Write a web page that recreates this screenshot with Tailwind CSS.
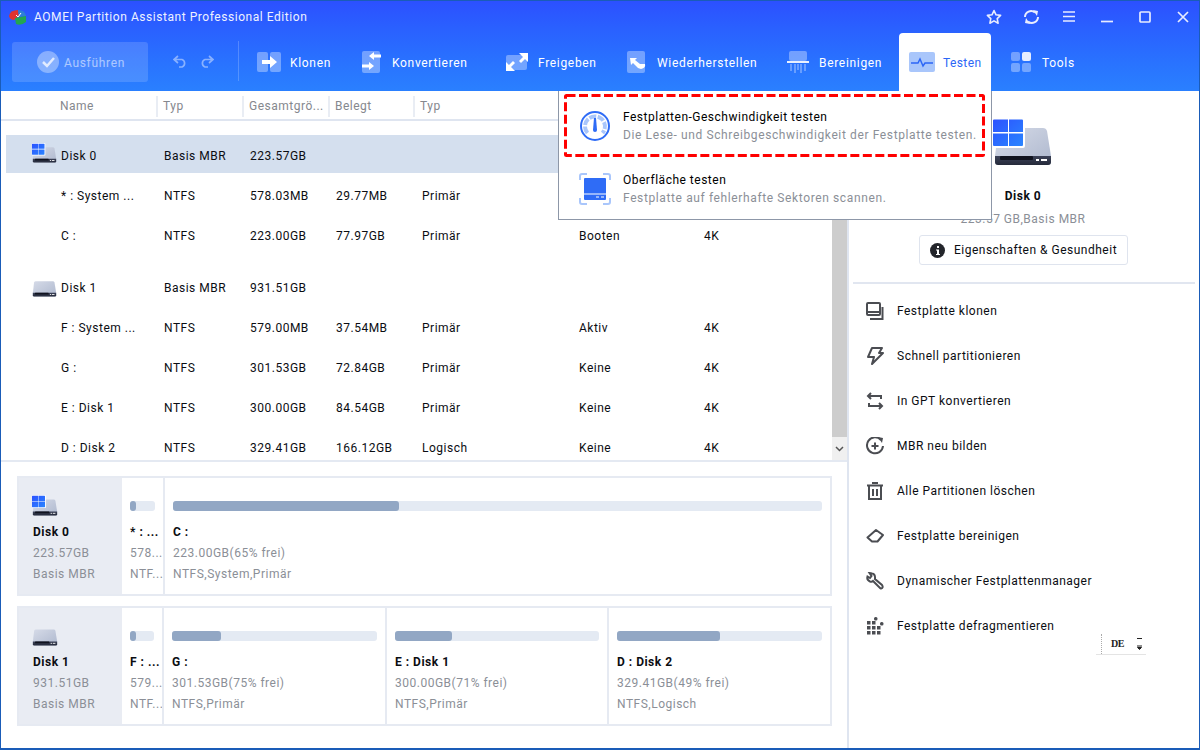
<!DOCTYPE html>
<html lang="en">
<head>
  <meta charset="UTF-8" />
  <title>AOMEI Partition Assistant</title>
  <script src="https://cdn.jsdelivr.net/npm/@tailwindcss/browser@4"></script>
</head>
<body class="w-[1200px] h-[750px] overflow-hidden bg-white [font-family:Roboto,sans-serif] text-[12px] tracking-[0.5px] text-[#0b0d12]">

<svg width="0" height="0" class="absolute">
  <defs>
    <linearGradient id="diskBody" x1="0" y1="0" x2="1" y2="1"><stop offset="0" stop-color="#d6dbe8"/><stop offset="1" stop-color="#aeb8ce"/></linearGradient>
    <linearGradient id="diskBase" x1="0" y1="0" x2="0" y2="1"><stop offset="0" stop-color="#3c4258"/><stop offset="1" stop-color="#252a3a"/></linearGradient>
    <linearGradient id="winBlue" x1="0" y1="0" x2="1" y2="1"><stop offset="0" stop-color="#2c52ff"/><stop offset="1" stop-color="#2a85ff"/></linearGradient>
    <symbol id="disk" viewBox="0 0 60 48">
      <path d="M9 10H50Q53 10 54 13L58 38V44Q58 47 55 47H5Q2 47 2 44V38L5 13Q6 10 9 10Z" fill="url(#diskBody)"/>
      <path d="M2 38H58V44Q58 47 55 47H5Q2 47 2 44Z" fill="url(#diskBase)"/>
      <rect x="7" y="38" width="33" height="4" rx="1" fill="#10131f"/>
      <rect x="43" y="41" width="3" height="2" fill="#fff"/><rect x="48" y="41" width="6" height="2" fill="#fff"/>
    </symbol>
    <symbol id="diskWin" viewBox="0 0 60 48">
      <use href="#disk"/>
      <rect x="0" y="0" width="32" height="30" rx="2" fill="#fff"/>
      <path d="M1 1.500h14v12.500H0V2.500q0-1 1-1ZM16 1.500h13q1 0 1 1V14H16ZM0 15.500h15V28H1q-1 0-1-1ZM16 15.500h14V27q0 1-1 1H16Z" fill="url(#winBlue)"/>
    </symbol>
  </defs>
</svg>

<div class="relative w-[1200px] h-[750px] flex flex-col border-x border-b-2 border-[#1a5cb8]">

  <!-- blue header -->
  <header class="h-[91px] shrink-0 bg-gradient-to-b from-[#2c50ff] to-[#2a80ff] border-t border-[#1a5cb8] text-white flex flex-col">
    <div class="h-[31px] flex items-center pl-[7px] shrink-0">
      <svg width="19" height="19" viewBox="0 0 19 19">
        <path d="M1 9Q2 3 10 3L11 9L6 13Q2 13 1 9Z" fill="#e0322f"/>
        <path d="M10 3Q17 3 18 9L11 10Z" fill="#2d7fd8"/>
        <path d="M7 11L18 9V15Q13 19 8 17Z" fill="#23a650"/>
        <path d="M8 8l2 2 3-4" stroke="#fff" stroke-width="1" fill="none"/>
      </svg>
      <span class="ml-[7px] text-[12px] tracking-[0.55px] text-[#eef1ff]">AOMEI Partition Assistant Professional Edition</span>
      <div class="ml-auto flex items-center">
        <svg class="mr-[21px]" width="16" height="16" viewBox="0 0 16 16"><path d="M8 1.500l2 4.300 4.600.6-3.400 3.200.9 4.600L8 11.900l-4.100 2.300.9-4.600L1.400 6.400 6 5.800Z" fill="none" stroke="#e8ecff" stroke-width="1.600" stroke-linejoin="round"/></svg>
        <svg class="mr-[23px]" width="17" height="16" viewBox="0 0 17 16"><path d="M2 8a6 6 0 0 1 10-4.400M15 8a6 6 0 0 1-10 4.400" fill="none" stroke="#e8ecff" stroke-width="2"/><path d="M10 1l5 1-1 5ZM7 15l-5-1 1-5Z" fill="#e8ecff"/></svg>
        <svg class="mr-[26px]" width="12" height="11" viewBox="0 0 12 11"><path d="M0 1h12M0 5.500h12M0 10h12" stroke="#e8ecff" stroke-width="1.700"/></svg>
        <svg class="mr-[26px] mt-[5px]" width="12" height="10" viewBox="0 0 12 10"><path d="M0 7.500h12" stroke="#e8ecff" stroke-width="1.700"/></svg>
        <svg class="mr-[26px]" width="12" height="12" viewBox="0 0 12 12"><rect x="1" y="1" width="10" height="10" rx="1" fill="none" stroke="#e8ecff" stroke-width="1.700"/></svg>
        <svg class="mr-[10px]" width="12" height="12" viewBox="0 0 12 12"><path d="M1 1l10 10M11 1L1 11" stroke="#e8ecff" stroke-width="1.700"/></svg>
      </div>
    </div>

    <div class="flex-1 flex items-stretch text-[12px] tracking-[0.68px]">
      <div class="ml-[11px] mt-[10px] mb-[9px] w-[136px] rounded-[3px] bg-white/15 flex items-center pl-[25px] gap-[5px] text-white/55">
        <svg width="22" height="22" viewBox="0 0 22 22"><circle cx="11" cy="11" r="11" fill="#fff" fill-opacity=".35"/><path d="M6 11l4 4 7-8" fill="none" stroke="#fff" stroke-opacity=".75" stroke-width="2.500"/></svg>
        <span class="mt-[2px]">Ausführen</span>
      </div>
      <div class="flex items-center gap-[11px] ml-[25px] w-[65px]">
        <svg width="15" height="13" viewBox="0 0 15 13"><path d="M5 1L1 4.500 5 8M1 4.500h8a4 4 0 0 1 0 7.500H6" fill="none" stroke="#fff" stroke-opacity=".45" stroke-width="1.700"/></svg>
        <svg width="15" height="13" viewBox="0 0 15 13"><path d="M10 1l4 3.500L10 8M14 4.500H6a4 4 0 0 0 0 7.500h3" fill="none" stroke="#fff" stroke-opacity=".45" stroke-width="1.700"/></svg>
      </div>
      <div class="w-px my-[9px] mb-[10px] bg-white/20"></div>

      <div class="ml-[8px] w-[104px] pl-[10px] flex items-center gap-[9px]">
        <svg width="24" height="20" viewBox="0 0 24 20"><rect width="11" height="20" rx="2" fill="#fff" fill-opacity=".35"/><rect x="13" width="11" height="20" rx="2" fill="#fff" fill-opacity=".35"/><path d="M5 8h8V4l7 6-7 6v-4H5Z" fill="#fff"/></svg>
        <span class="mt-[2px]">Klonen</span>
      </div>
      <div class="w-[145px] pl-[11px] flex items-center gap-[11px]">
        <svg width="19" height="22" viewBox="0 0 19 22"><rect x="0" y="0" width="18" height="22" rx="2" fill="#fff" fill-opacity=".35"/><path d="M19 3.500v3h-7v2.500L7 5l5-4v2.500ZM0 13.500h7V11l5 4-5 4v-2.500H0Z" fill="#fff"/></svg>
        <span class="mt-[2px]">Konvertieren</span>
      </div>
      <div class="w-[121px] pl-[10px] flex items-center gap-[10px]">
        <svg width="22" height="18" viewBox="0 0 22 18"><rect y="2" width="21" height="15" rx="2" fill="#fff" fill-opacity=".35"/><path d="M13 0h9v9l-3-3-4 4-2-2 4-4ZM9 18H0V9l3 3 4-4 2 2-4 4Z" fill="#fff"/></svg>
        <span class="mt-[2px]">Freigeben</span>
      </div>
      <div class="w-[160px] pl-[10px] flex items-center gap-[10px]">
        <svg width="20" height="22" viewBox="0 0 20 22"><rect width="18" height="22" rx="2" fill="#fff" fill-opacity=".35"/><path d="M3 7h7l-2 2 5 4h5q1 4-4 5-3 0-5-3l-3-3-2 2Z" fill="#fff"/></svg>
        <span class="mt-[2px]">Wiederherstellen</span>
      </div>
      <div class="w-[122px] pl-[10px] flex items-center gap-[10px]">
        <svg width="22" height="22" viewBox="0 0 22 22"><rect x="2" width="18" height="10" rx="2" fill="#fff" fill-opacity=".35"/><rect y="10" width="22" height="2" fill="#fff" fill-opacity=".9"/><path d="M4 13v7M8 13v9M11 13v6M14 13v9M18 13v7" stroke="#fff" stroke-opacity=".4" stroke-width="1.500"/></svg>
        <span class="mt-[2px]">Bereinigen</span>
      </div>
      <div class="w-[92px] mt-px pl-[10px] flex items-center gap-[8px] bg-white rounded-t-[4px] text-[#2c66f6] tracking-[0.4px]">
        <svg width="26" height="20" viewBox="0 0 26 20"><rect width="26" height="20" rx="2" fill="#a9c6fb"/><path d="M2 11h7l2-4 3 7 2-3h8" fill="none" stroke="#2c66f6" stroke-width="1.500"/></svg>
        <span class="mt-[2px]">Testen</span>
      </div>
      <div class="ml-[20px] flex items-center gap-[11px]">
        <svg width="20" height="20" viewBox="0 0 20 20"><rect width="9" height="9" rx="2" fill="#fff" fill-opacity=".35"/><rect x="11" width="9" height="9" rx="2" fill="#e6edff"/><rect y="11" width="9" height="9" rx="2" fill="#fff" fill-opacity=".35"/><rect x="11" y="11" width="9" height="9" rx="2" fill="#fff" fill-opacity=".35"/></svg>
        <span class="mt-[2px]">Tools</span>
      </div>
    </div>
  </header>

  <div class="flex-1 flex min-h-0">
    <!-- left side -->
    <main class="w-[846px] shrink-0 flex flex-col">
      <div class="h-[30px] shrink-0 border-b-2 border-[#dfe5f0] grid grid-cols-[157px_86px_86px_85px_1fr] items-center text-[#85888e] pt-[2px]">
        <div class="pl-[59px] border-r-2 border-[#e9edf4] h-[21px] leading-[21px]">Name</div>
        <div class="pl-[5px] border-r-2 border-[#e9edf4] h-[21px] leading-[21px]">Typ</div>
        <div class="pl-[5px] border-r-2 border-[#e9edf4] h-[21px] leading-[21px]">Gesamtgrö...</div>
        <div class="pl-[5px] border-r-2 border-[#e9edf4] h-[21px] leading-[21px]">Belegt</div>
        <div class="pl-[5px]">Typ</div>
      </div>

      <div class="h-[341px] shrink-0 flex border-b-2 border-[#e4e9f2]">
        <div class="flex-1 pt-[14px] pl-[5px] overflow-hidden">
          <div class="h-[38px] mb-[2px] pt-[4px] bg-[#d4dfee] grid grid-cols-[158px_86px_86px] items-center">
            <div class="flex items-center pl-[26px] gap-[4px]"><svg class="w-[25px] h-[20px] -mt-[6px]" viewBox="0 0 60 48"><use href="#diskWin"/></svg><span>Disk 0</span></div>
            <div>Basis MBR</div><div>223.57GB</div>
          </div>
          <div class="h-[40px] pt-[2px] grid grid-cols-[158px_86px_86px_86px_157px_125px_1fr] items-center"><div class="pl-[55px]">* : System ...</div><div>NTFS</div><div>578.03MB</div><div>29.77MB</div><div>Primär</div></div>
          <div class="h-[40px] pt-[2px] grid grid-cols-[158px_86px_86px_86px_157px_125px_1fr] items-center"><div class="pl-[55px]">C :</div><div>NTFS</div><div>223.00GB</div><div>77.97GB</div><div>Primär</div><div>Booten</div><div>4K</div></div>
          <div class="h-[40px] pt-[2px] mt-[12px] grid grid-cols-[158px_86px_86px] items-center">
            <div class="flex items-center pl-[26px] gap-[4px]"><svg class="w-[25px] h-[20px] -mt-[3px]" viewBox="0 0 60 48"><use href="#disk"/></svg><span>Disk 1</span></div>
            <div>Basis MBR</div><div>931.51GB</div>
          </div>
          <div class="h-[40px] pt-[2px] grid grid-cols-[158px_86px_86px_86px_157px_125px_1fr] items-center"><div class="pl-[55px]">F : System ...</div><div>NTFS</div><div>579.00MB</div><div>37.54MB</div><div>Primär</div><div>Aktiv</div><div>4K</div></div>
          <div class="h-[40px] pt-[2px] grid grid-cols-[158px_86px_86px_86px_157px_125px_1fr] items-center"><div class="pl-[55px]">G :</div><div>NTFS</div><div>301.53GB</div><div>72.84GB</div><div>Primär</div><div>Keine</div><div>4K</div></div>
          <div class="h-[40px] pt-[2px] grid grid-cols-[158px_86px_86px_86px_157px_125px_1fr] items-center"><div class="pl-[55px]">E : Disk 1</div><div>NTFS</div><div>300.00GB</div><div>84.54GB</div><div>Primär</div><div>Keine</div><div>4K</div></div>
          <div class="h-[40px] pt-[2px] grid grid-cols-[158px_86px_86px_86px_157px_125px_1fr] items-center"><div class="pl-[55px]">D : Disk 2</div><div>NTFS</div><div>329.41GB</div><div>166.12GB</div><div>Logisch</div><div>Keine</div><div>4K</div></div>
        </div>
        <div class="w-[15px] flex flex-col bg-[#f0f0f0]">
          <div class="flex-1 bg-[#cdcdcd]"></div>
          <div class="h-[23px] flex items-center justify-center">
            <svg width="9" height="6" viewBox="0 0 9 6"><path d="M1 1l3.500 3.500L8 1" fill="none" stroke="#555" stroke-width="1.500"/></svg>
          </div>
        </div>
      </div>

      <!-- disk map -->
      <div class="flex-1 pl-[16px] pt-[14px] flex flex-col gap-[10px]">
        <div class="w-[815px] h-[120px] border-2 border-[#e6eaf2] flex">
          <div class="w-[103px] shrink-0 bg-[#e9ecf3] pl-[14px] pt-[17px] leading-[21px]">
            <svg class="w-[26px] h-[21px] -ml-[1px] mb-[6px]" viewBox="0 0 60 48"><use href="#diskWin"/></svg>
            <div class="font-bold">Disk 0</div>
            <div class="text-[#8b8f97]">223.57GB</div>
            <div class="text-[#8b8f97]">Basis MBR</div>
          </div>
          <div class="w-[43px] shrink-0 pl-[8px] pt-[23px] overflow-hidden border-r-2 border-[#e6eaf2] leading-[21px]">
            <div class="w-[25px] h-[10px] rounded-[3px] bg-[#e4eaf3] mb-[11px]"><div class="w-[6px] h-full rounded-[3px] bg-[#92a7c4]"></div></div>
            <div class="font-bold whitespace-nowrap">* : ...</div>
            <div class="text-[#8b8f97] whitespace-nowrap">578...</div>
            <div class="text-[#8b8f97] whitespace-nowrap">NTF...</div>
          </div>
          <div class="flex-1 pl-[8px] pr-[8px] pt-[23px] leading-[21px]">
            <div class="h-[10px] rounded-[3px] bg-[#e4eaf3] mb-[11px]"><div class="w-[226px] h-full rounded-[3px] bg-[#92a7c4]"></div></div>
            <div class="font-bold">C :</div>
            <div class="text-[#8b8f97]">223.00GB(65% frei)</div>
            <div class="text-[#8b8f97]">NTFS,System,Primär</div>
          </div>
        </div>

        <div class="w-[815px] h-[120px] border-2 border-[#e6eaf2] flex">
          <div class="w-[103px] shrink-0 bg-[#e9ecf3] pl-[14px] pt-[17px] leading-[21px]">
            <svg class="w-[26px] h-[21px] -ml-[1px] mb-[6px]" viewBox="0 0 60 48"><use href="#disk"/></svg>
            <div class="font-bold">Disk 1</div>
            <div class="text-[#8b8f97]">931.51GB</div>
            <div class="text-[#8b8f97]">Basis MBR</div>
          </div>
          <div class="w-[42px] shrink-0 pl-[8px] pt-[23px] overflow-hidden border-r-2 border-[#e6eaf2] leading-[21px]">
            <div class="w-[24px] h-[10px] rounded-[3px] bg-[#e4eaf3] mb-[11px]"><div class="w-[6px] h-full rounded-[3px] bg-[#92a7c4]"></div></div>
            <div class="font-bold whitespace-nowrap">F : ...</div>
            <div class="text-[#8b8f97] whitespace-nowrap">579...</div>
            <div class="text-[#8b8f97] whitespace-nowrap">NTF...</div>
          </div>
          <div class="w-[223px] shrink-0 px-[8px] pt-[23px] border-r-2 border-[#e6eaf2] leading-[21px]">
            <div class="h-[10px] rounded-[3px] bg-[#e4eaf3] mb-[11px]"><div class="w-[49px] h-full rounded-[3px] bg-[#92a7c4]"></div></div>
            <div class="font-bold">G :</div>
            <div class="text-[#8b8f97]">301.53GB(75% frei)</div>
            <div class="text-[#8b8f97]">NTFS,Primär</div>
          </div>
          <div class="w-[222px] shrink-0 px-[8px] pt-[23px] border-r-2 border-[#e6eaf2] leading-[21px]">
            <div class="h-[10px] rounded-[3px] bg-[#e4eaf3] mb-[11px]"><div class="w-[57px] h-full rounded-[3px] bg-[#92a7c4]"></div></div>
            <div class="font-bold">E : Disk 1</div>
            <div class="text-[#8b8f97]">300.00GB(71% frei)</div>
            <div class="text-[#8b8f97]">NTFS,Primär</div>
          </div>
          <div class="flex-1 px-[8px] pt-[23px] leading-[21px]">
            <div class="h-[10px] rounded-[3px] bg-[#e4eaf3] mb-[11px]"><div class="w-[103px] h-full rounded-[3px] bg-[#92a7c4]"></div></div>
            <div class="font-bold">D : Disk 2</div>
            <div class="text-[#8b8f97]">329.41GB(49% frei)</div>
            <div class="text-[#8b8f97]">NTFS,Logisch</div>
          </div>
        </div>
      </div>
    </main>

    <!-- right side -->
    <aside class="flex-1 border-l-2 border-[#dfe5f0] flex flex-col">
      <div class="h-[193px] shrink-0 flex flex-col items-center border-b-2 border-[#e1e6f0] mx-[4px] pr-[2px]">
        <svg class="mt-[27px] -ml-[1px] w-[60px] h-[48px]" viewBox="0 0 60 48"><use href="#diskWin"/></svg>
        <div class="mt-[21px] font-bold">Disk 0</div>
        <div class="mt-[5px] text-[#8b8f97]">223.57 GB,Basis MBR</div>
        <div class="mt-[7px] ml-[1px] w-[209px] h-[30px] rounded-[3px] border border-[#dfe4ee] flex items-center justify-center gap-[9px]">
          <svg width="15" height="15" viewBox="0 0 15 15"><circle cx="7.500" cy="7.500" r="7.500" fill="#23252b"/><path d="M7 3h2v2H7ZM6 6.500h3v4.500h1v1H6v-1h1V7.500H6Z" fill="#fff"/></svg>
          <span>Eigenschaften &amp; Gesundheit</span>
        </div>
      </div>

      <div class="pl-[17px] pt-[4px] flex flex-col">
        <div class="h-[45px] flex items-center gap-[13px]">
          <svg class="w-[18px]" height="18" viewBox="0 0 18 18"><path d="M2 1h11a1 1 0 0 1 1 1v10a1 1 0 0 1-1 1H2a1 1 0 0 1-1-1V2a1 1 0 0 1 1-1ZM1 10h13M16.500 5v12H4" fill="none" stroke="#4b4d52" stroke-width="2"/></svg>
          <span>Festplatte klonen</span>
        </div>
        <div class="h-[45px] flex items-center gap-[13px]">
          <svg class="w-[18px]" height="18" viewBox="0 0 18 18"><path d="M6 1h10l-3 5h4L6 17l2-7H2Z" fill="none" stroke="#4b4d52" stroke-width="2" stroke-linejoin="round"/></svg>
          <span>Schnell partitionieren</span>
        </div>
        <div class="h-[45px] flex items-center gap-[13px]">
          <svg class="w-[18px]" height="18" viewBox="0 0 18 18"><path d="M5 1L2 4l3 3M2 4h13v3M13 11l3 3-3 3M16 14H3v-3" fill="none" stroke="#4b4d52" stroke-width="2"/></svg>
          <span>In GPT konvertieren</span>
        </div>
        <div class="h-[45px] flex items-center gap-[13px]">
          <svg class="w-[18px]" height="18" viewBox="0 0 18 18"><path d="M15 3a8 8 0 1 0 2 6M5.500 9h7M9 5.500v7" fill="none" stroke="#4b4d52" stroke-width="2"/><path d="M12 0l5 1-1 5Z" fill="#4b4d52"/></svg>
          <span>MBR neu bilden</span>
        </div>
        <div class="h-[45px] flex items-center gap-[13px]">
          <svg class="w-[18px]" height="18" viewBox="0 0 18 18"><path d="M1 3.500h16M6 1h6M3 4v13h12V4M7 7v7M11 7v7" fill="none" stroke="#4b4d52" stroke-width="2"/></svg>
          <span>Alle Partitionen löschen</span>
        </div>
        <div class="h-[45px] flex items-center gap-[13px]">
          <svg class="w-[18px]" height="18" viewBox="0 0 18 18"><path d="M10 3l7 5-5.500 6.500H6L1.500 10.500Z" fill="none" stroke="#4b4d52" stroke-width="2" stroke-linejoin="round"/></svg>
          <span>Festplatte bereinigen</span>
        </div>
        <div class="h-[45px] flex items-center gap-[13px]">
          <svg class="w-[18px]" height="18" viewBox="0 0 18 18"><path d="M6 1.500L3.500 1 5.500 4 4 6 1.500 4.500Q.5 8 4 9.500q2 .5 3-.5l7 7q2 1 2.500-.5.5-1-.5-2.500L9 7q.5-5-3-5.500Z" fill="none" stroke="#4b4d52" stroke-width="2"/></svg>
          <span>Dynamischer Festplattenmanager</span>
        </div>
        <div class="h-[45px] flex items-center gap-[13px]">
          <svg class="w-[18px]" height="18" viewBox="0 0 18 18" fill="#4b4d52"><rect x="1" y="4" width="3.500" height="3.500"/><rect x="6" y="4" width="3.500" height="3.500"/><rect x="8" y="0" width="3.500" height="3.500" rx="1.500"/><rect x="1" y="9" width="3.500" height="3.500"/><rect x="6" y="9" width="3.500" height="3.500"/><rect x="11" y="9" width="3.500" height="3.500"/><rect x="14" y="5" width="3.500" height="3.500" rx="1.500"/><rect x="1" y="14" width="3.500" height="3.500"/><rect x="6" y="14" width="3.500" height="3.500"/><rect x="11" y="14" width="3.500" height="3.500"/></svg>
          <span>Festplatte defragmentieren</span>
        </div>
      </div>
    </aside>
  </div>

  <!-- Testen dropdown -->
  <div class="absolute left-[557px] top-[91px] w-[434px] h-[129px] bg-white border border-[#8d97a8] border-t-0 flex flex-col pl-[64px] tracking-[0.62px]">
    <div class="h-[63px] pt-[17px] leading-[18px]">
      <svg class="absolute left-[20px] top-[19px]" width="32" height="32" viewBox="0 0 32 32"><circle cx="16" cy="16" r="14" fill="none" stroke="#2f6cf6" stroke-width="2"/><path d="M8.500 23a10 10 0 1 1 15 0" fill="none" stroke="#a9c6fb" stroke-width="4" stroke-dasharray="7 1.500"/><path d="M15 8h2l1 12a2 2 0 0 1-4 0Z" fill="#2f6cf6"/></svg>
      <div class="text-black tracking-[0.5px]">Festplatten-Geschwindigkeit testen</div>
      <div class="text-[#8b8f97]">Die Lese- und Schreibgeschwindigkeit der Festplatte testen.</div>
    </div>
    <div class="pt-[17px] leading-[18px]">
      <svg class="absolute left-[20px] top-[82px]" width="32" height="32" viewBox="0 0 32 32"><path d="M1 7V3a2 2 0 0 1 2-2h5M24 1h5a2 2 0 0 1 2 2v4M31 25v4a2 2 0 0 1-2 2h-5M8 31H3a2 2 0 0 1-2-2v-4" fill="none" stroke="#a9c6fb" stroke-width="2"/><rect x="5" y="5" width="22" height="22" rx="1" fill="#2f6cf6"/><path d="M5 21h22M17 24h3M22 24h3" stroke="#fff"/></svg>
      <div class="text-black tracking-[0.5px]">Oberfläche testen</div>
      <div class="text-[#8b8f97]">Festplatte auf fehlerhafte Sektoren scannen.</div>
    </div>
  </div>

  <!-- red dashed highlight -->
  <svg class="absolute left-[561px] top-[92px]" width="426" height="66" viewBox="0 0 426 66"><rect x="3.500" y="3.500" width="418" height="60" rx="1" fill="none" stroke="#ff0000" stroke-width="3" stroke-dasharray="9 3.500"/></svg>

  <!-- language picker -->
  <div class="absolute left-[1095px] top-[633px] w-[50px] h-[22px] border-b border-[#e4e4e4] flex items-center tracking-normal">
    <div class="h-[20px] border-l border-dotted border-[#aaa] ml-[5px]"></div>
    <span class="ml-[9px] w-[12px] whitespace-nowrap [font-family:'Liberation_Serif',serif] text-[10px] font-bold tracking-[-0.5px] text-[#222]">DE</span>
    <svg class="ml-[13px]" width="7" height="13" viewBox="0 0 7 13"><path d="M1 1.500h5M1 9h5M1.500 10.500l2 2 2-2Z" stroke="#222" fill="#222"/></svg>
  </div>
</div>
</body>
</html>
